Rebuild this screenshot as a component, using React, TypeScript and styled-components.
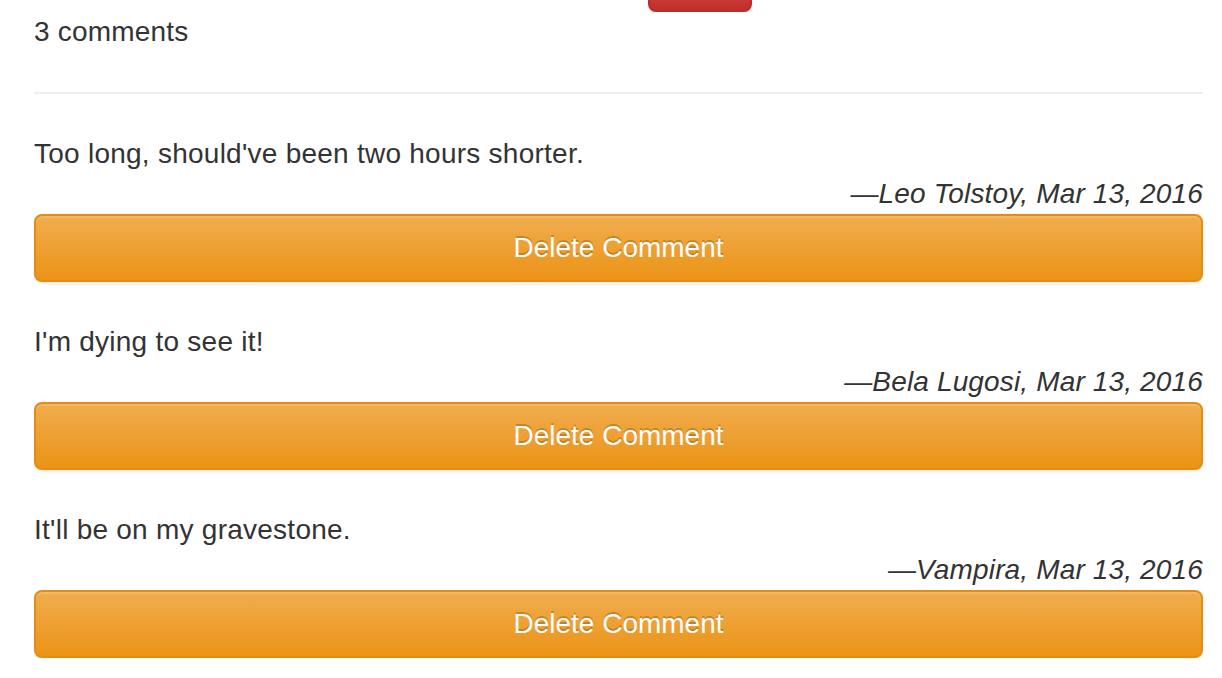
import React from "react";
import styled, { createGlobalStyle } from "styled-components";

const Global = createGlobalStyle`
  html, body { margin: 0; padding: 0; background: #fff; }
  body {
    font-family: "Liberation Sans", Arial, Helvetica, sans-serif;
    font-size: 28px;
    line-height: 40px;
    color: #333;
  }
`;

const Page = styled.div`
  padding: 0 19px 0 34px;
`;

const TopStrip = styled.div`
  height: 12px;
  overflow: hidden;
  display: flex;
  align-items: flex-end;
  padding-left: 614px;
`;

const DangerButton = styled.button`
  flex: none;
  width: 104px;
  height: 40px;
  border: 2px solid #b92c28;
  border-radius: 8px;
  background-image: linear-gradient(to bottom, #d9534f 0, #c12e2a 100%);
  box-shadow: inset 0 2px 0 rgba(255, 255, 255, 0.15), 0 2px 2px rgba(0, 0, 0, 0.075);
  padding: 0;
`;

const Count = styled.div`
  height: 40px;
  letter-spacing: 0.2px;
`;

const Rule = styled.hr`
  margin: 40px 0;
  border: 0;
  border-top: 2px solid #eee;
  height: 0;
`;

const CommentList = styled.div`
  display: flex;
  flex-direction: column;
  gap: 40px;
`;

const Comment = styled.div`
  display: flex;
  flex-direction: column;
`;

const Body = styled.p`
  margin: 0;
  letter-spacing: 0.25px;
`;

const Byline = styled.div`
  text-align: right;
  font-style: italic;
  letter-spacing: 0.15px;
`;

const WarningButton = styled.button`
  display: block;
  width: 100%;
  height: 68px;
  padding: 12px 24px;
  font-family: inherit;
  font-size: 28px;
  line-height: 40px;
  color: #fff;
  text-shadow: 0 -2px 0 rgba(0, 0, 0, 0.2);
  border: 2px solid #e38d13;
  border-radius: 8px;
  background-image: linear-gradient(to bottom, #f0ad4e 0, #eb9316 100%);
  box-shadow: inset 0 2px 0 rgba(255, 255, 255, 0.15), 0 2px 2px rgba(0, 0, 0, 0.075);
  cursor: pointer;
`;

const comments = [
  { text: "Too long, should've been two hours shorter.", author: "Leo Tolstoy", date: "Mar 13, 2016" },
  { text: "I'm dying to see it!", author: "Bela Lugosi", date: "Mar 13, 2016" },
  { text: "It'll be on my gravestone.", author: "Vampira", date: "Mar 13, 2016" },
];

export default function App() {
  return (
    <>
      <Global />
      <Page>
        <TopStrip>
          <DangerButton aria-label="danger" />
        </TopStrip>
        <Count>3 comments</Count>
        <Rule />
        <CommentList>
          {comments.map((c) => (
            <Comment key={c.author}>
              <Body>{c.text}</Body>
              <Byline>
                —{c.author}, {c.date}
              </Byline>
              <WarningButton>Delete Comment</WarningButton>
            </Comment>
          ))}
        </CommentList>
      </Page>
    </>
  );
}
